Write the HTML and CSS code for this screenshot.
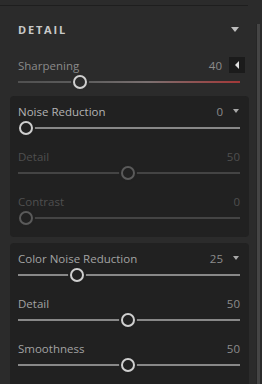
FILE: index.html
```html
<!DOCTYPE html>
<html lang="en">
<head>
    <meta charset="UTF-8">
    <meta name="viewport" content="width=device-width, initial-scale=1.0">
    <title>Detail</title>
    <link rel="stylesheet" href="styles.css">
</head>
<body>
<div class="window">
    <div class="content">
        <div class="top-rule"></div>
        <div class="header">
            <span class="title">DETAIL</span>
            <span class="caret"></span>
        </div>

        <div class="row sharpen">
            <div class="row-head">
                <span class="label">Sharpening</span>
                <span class="right">
                    <span class="value">40</span>
                    <span class="arrow-box"><span class="arrow-left"></span></span>
                </span>
            </div>
            <div class="slider">
                <div class="track red"></div>
                <div class="thumb" style="left: 55px"></div>
            </div>
        </div>

        <div class="group first">
            <div class="row">
                <div class="row-head">
                    <span class="label bright">Noise Reduction</span>
                    <span class="right">
                        <span class="value">0</span>
                        <span class="caret small"></span>
                    </span>
                </div>
                <div class="slider">
                    <div class="track"></div>
                    <div class="thumb" style="left: 1px"></div>
                </div>
            </div>
            <div class="row dim">
                <div class="row-head">
                    <span class="label">Detail</span>
                    <span class="value">50</span>
                </div>
                <div class="slider">
                    <div class="track"></div>
                    <div class="thumb" style="left: 103px"></div>
                </div>
            </div>
            <div class="row dim last">
                <div class="row-head">
                    <span class="label">Contrast</span>
                    <span class="value">0</span>
                </div>
                <div class="slider">
                    <div class="track"></div>
                    <div class="thumb" style="left: 1px"></div>
                </div>
            </div>
        </div>

        <div class="group">
            <div class="row">
                <div class="row-head">
                    <span class="label">Color Noise Reduction</span>
                    <span class="right">
                        <span class="value">25</span>
                        <span class="caret small"></span>
                    </span>
                </div>
                <div class="slider">
                    <div class="track"></div>
                    <div class="thumb" style="left: 52px"></div>
                </div>
            </div>
            <div class="row">
                <div class="row-head">
                    <span class="label">Detail</span>
                    <span class="value">50</span>
                </div>
                <div class="slider">
                    <div class="track"></div>
                    <div class="thumb" style="left: 103px"></div>
                </div>
            </div>
            <div class="row">
                <div class="row-head">
                    <span class="label">Smoothness</span>
                    <span class="value">50</span>
                </div>
                <div class="slider">
                    <div class="track"></div>
                    <div class="thumb" style="left: 103px"></div>
                </div>
            </div>
        </div>
    </div>
    <div class="scrollbar">
        <div class="scroll-thumb"></div>
    </div>
</div>
</body>
</html>
```

FILE: styles.css
```css
body {
    margin: 0;
    padding: 0;
    background-color: #2b2b2b;
    font-family: "Open Sans", "Noto Sans", sans-serif;
    overflow: hidden;
}
.window {
    display: flex;
    width: 262px;
    height: 384px;
    overflow: hidden;
}
.content {
    width: 254px;
    flex: none;
}
.top-rule {
    margin-top: 5px;
    width: 248px;
    height: 1px;
    background-color: #1e1e1e;
}
.header {
    display: flex;
    justify-content: space-between;
    align-items: center;
    height: 16px;
    margin-top: 15px;
    padding: 0 15px 0 18px;
}
.title {
    color: #c9c9c9;
    font-size: 11px;
    font-weight: bold;
    letter-spacing: 1.8px;
}
.caret {
    width: 0;
    height: 0;
    border-left: 4px solid transparent;
    border-right: 4px solid transparent;
    border-top: 5px solid #bdbdbd;
}
.caret.small {
    border-left-width: 3.5px;
    border-right-width: 3.5px;
    border-top-width: 4px;
    border-top-color: #a8a8a8;
    margin-left: 10px;
    margin-right: 1px;
}
.row {
    padding: 0 9px 0 8px;
    margin-bottom: 13px;
}
.row.last {
    margin-bottom: 0;
}
.row-head {
    display: flex;
    justify-content: space-between;
    align-items: center;
    height: 16px;
    font-size: 11.5px;
    color: #a3a3a3;
}
.right {
    display: flex;
    align-items: center;
}
.value {
    color: #8c8c8c;
}
.label.bright {
    color: #b3b3b3;
}
.sharpen {
    margin-top: 20px;
    padding-left: 18px;
    padding-right: 14px;
    margin-bottom: 0;
}
.sharpen .label {
    color: #8a8a8a;
}
.sharpen .value {
    margin-right: 7px;
}
.arrow-box {
    display: flex;
    align-items: center;
    justify-content: center;
    width: 16px;
    height: 16px;
    margin-right: -5px;
    background-color: #1b1b1b;
}
.arrow-left {
    width: 0;
    height: 0;
    border-top: 4px solid transparent;
    border-bottom: 4px solid transparent;
    border-right: 4px solid #e0e0e0;
}
.slider {
    position: relative;
    height: 14px;
    margin-top: 2px;
}
.track {
    position: absolute;
    left: 0;
    right: 0;
    top: 6px;
    height: 2px;
    background-color: #888888;
}
.track.red {
    background: linear-gradient(to right, #505050 0, #5e5e5e 70px, #7a7070 130px, #a33838 100%);
}
.thumb {
    position: absolute;
    top: 0;
    width: 10px;
    height: 10px;
    border: 2px solid #cfcfcf;
    border-radius: 50%;
    background-color: #2b2b2b;
    box-shadow: 0 0 0 2px #2b2b2b;
}
.group {
    margin: 0 5px 6px 10px;
    padding: 7px 0 12px;
    background-color: #212121;
    border-radius: 4px;
}
.group.first {
    margin-top: 7px;
}
.group .thumb {
    background-color: #212121;
    box-shadow: 0 0 0 2px #212121;
}
.row.dim .label,
.row.dim .value {
    color: #4f4f4f;
}
.row.dim .track {
    background-color: #444444;
}
.row.dim .thumb {
    border-color: #5a5a5a;
}
.scrollbar {
    width: 8px;
    flex: none;
}
.scroll-thumb {
    margin: 24px 2px 0 2px;
    height: 360px;
    background-color: #454545;
    border-left: 1px solid #262626;
}
```
